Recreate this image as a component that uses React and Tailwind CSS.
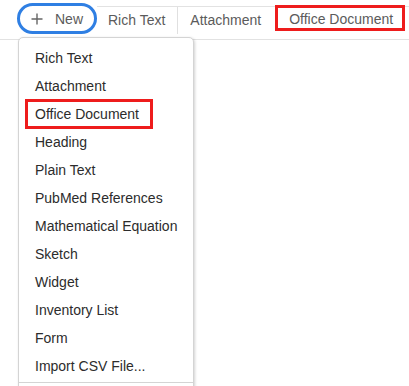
import React from 'react';

const menuItems = [
  'Rich Text',
  'Attachment',
  'Office Document',
  'Heading',
  'Plain Text',
  'PubMed References',
  'Mathematical Equation',
  'Sketch',
  'Widget',
  'Inventory List',
  'Form',
  'Import CSV File...',
];

const App = () => {
  return (
    <div
      className="relative w-[409px] h-[386px] overflow-hidden bg-white text-[14px]"
      style={{ fontFamily: '"Liberation Sans", Arial, sans-serif' }}
    >
      {/* toolbar */}
      <div className="flex items-start h-[40px] border-b border-[#e2e2e2]">
        <button className="ml-[17px] mt-[3px] w-[80px] h-[31px] shrink-0 box-border rounded-full border-[3px] border-[#2f7fe3] flex items-center pl-[11px] text-[#5b5b5b]">
          <svg width="12" height="12" viewBox="0 0 12 12" className="shrink-0">
            <path d="M6 0.5v11M0.5 6h11" stroke="#666" strokeWidth="1.4" fill="none" />
          </svg>
          <span className="ml-[12px] leading-[18px]">New</span>
        </button>
        <div className="flex-1 mt-[6px] h-[34px] border-t border-[#e2e2e2] flex items-start text-[#5b5b5b]">
          <div className="pl-[11px] pr-[12px] leading-[26px] -mt-[1px] pt-[1px]">Rich Text</div>
          <div className="w-px h-[27px] bg-[#e0e0e0]" />
          <div className="pl-[12px] pr-[12px] leading-[26px] -mt-[1px] pt-[1px]">Attachment</div>
          <div className="ml-[2px] -mt-[2px] w-[130px] h-[26px] box-border border-[3px] border-[#ee1c1c] pl-[11px] pt-[2px] leading-[18px] whitespace-nowrap">
            Office Document
          </div>
        </div>
      </div>

      {/* dropdown menu */}
      <div className="absolute left-[18px] top-[37px] w-[176px] h-[400px] bg-white border border-[#d4d4d4] rounded-t-[5px] shadow-[1px_1px_3px_rgba(0,0,0,0.18)] pt-[6px] text-[#2c2c2c]">
        {menuItems.map((item) =>
          item === 'Office Document' ? (
            <div
              key={item}
              className="ml-[6px] -my-[1px] w-[128px] h-[30px] box-border border-[3px] border-[#ee1c1c] pl-[7px] leading-[24px]"
            >
              {item}
            </div>
          ) : (
            <div key={item} className="pl-[16px] h-[28px] leading-[28px] whitespace-nowrap">
              {item}
            </div>
          )
        )}
        <div className="mt-[2px] border-t border-[#d4d4d4] h-[28px]" />
      </div>
    </div>
  );
};

export default App;
